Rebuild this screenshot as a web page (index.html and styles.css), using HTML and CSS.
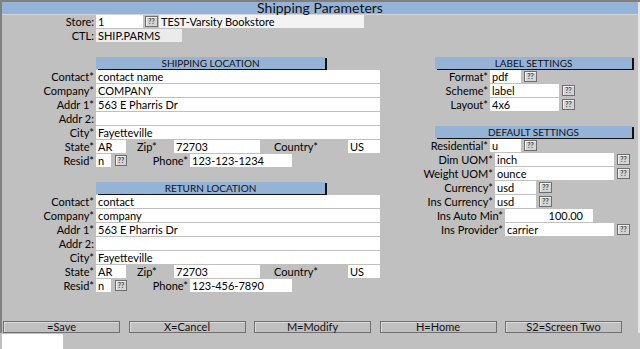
FILE: index.html
```html
<!DOCTYPE html>
<html lang="en">
<head>
  <meta charset="UTF-8">
  <title>Shipping Parameters</title>
  <link rel="stylesheet" href="styles.css">
</head>
<body>
  <div class="screen">
    <div class="frame">
      <div class="titlebar">Shipping Parameters</div>

      <!-- Cabecera: tienda y control -->
      <div class="row">
        <label class="lbl">Store:</label>
        <input class="fld store" value="1" readonly>
        <button class="lookup">??</button>
        <input class="fld store-desc" value="TEST-Varsity Bookstore" readonly>
      </div>
      <div class="row">
        <label class="lbl">CTL:</label>
        <input class="fld ctl" value="SHIP.PARMS" readonly>
      </div>

      <div class="main">
        <div class="col-left">
          <div class="section">
            <div class="head">SHIPPING LOCATION</div>
            <div class="row"><label class="lbl">Contact*</label><input class="fld full" value="contact name" readonly></div>
            <div class="row"><label class="lbl">Company*</label><input class="fld full" value="COMPANY" readonly></div>
            <div class="row"><label class="lbl">Addr 1*</label><input class="fld full" value="563 E Pharris Dr" readonly></div>
            <div class="row"><label class="lbl">Addr 2:</label><input class="fld full" value="" readonly></div>
            <div class="row"><label class="lbl">City*</label><input class="fld full" value="Fayetteville" readonly></div>
            <div class="row">
              <label class="lbl">State*</label><input class="fld state" value="AR" readonly>
              <span class="lbl-zip">Zip*</span><input class="fld zip" value="72703" readonly>
              <span class="lbl-country">Country*</span><input class="fld country" value="US" readonly>
            </div>
            <div class="row">
              <label class="lbl">Resid*</label><input class="fld resid" value="n" readonly><button class="lookup resid-btn">??</button>
              <span class="lbl-phone">Phone*</span><input class="fld phone" value="123-123-1234" readonly>
            </div>
          </div>

          <div class="section">
            <div class="head">RETURN LOCATION</div>
            <div class="row"><label class="lbl">Contact*</label><input class="fld full" value="contact" readonly></div>
            <div class="row"><label class="lbl">Company*</label><input class="fld full" value="company" readonly></div>
            <div class="row"><label class="lbl">Addr 1*</label><input class="fld full" value="563 E Pharris Dr" readonly></div>
            <div class="row"><label class="lbl">Addr 2:</label><input class="fld full" value="" readonly></div>
            <div class="row"><label class="lbl">City*</label><input class="fld full" value="Fayetteville" readonly></div>
            <div class="row">
              <label class="lbl">State*</label><input class="fld state" value="AR" readonly>
              <span class="lbl-zip">Zip*</span><input class="fld zip" value="72703" readonly>
              <span class="lbl-country">Country*</span><input class="fld country" value="US" readonly>
            </div>
            <div class="row">
              <label class="lbl">Resid*</label><input class="fld resid" value="n" readonly><button class="lookup resid-btn">??</button>
              <span class="lbl-phone">Phone*</span><input class="fld phone" value="123-456-7890" readonly>
            </div>
          </div>
        </div>

        <div class="col-right">
          <div class="section">
            <div class="head">LABEL SETTINGS</div>
            <div class="row"><label class="lbl-r">Format*</label><input class="fld short" value="pdf" readonly><button class="lookup">??</button></div>
            <div class="row"><label class="lbl-r">Scheme*</label><input class="fld medium" value="label" readonly><button class="lookup">??</button></div>
            <div class="row"><label class="lbl-r">Layout*</label><input class="fld medium" value="4x6" readonly><button class="lookup">??</button></div>
          </div>

          <div class="section">
            <div class="head">DEFAULT SETTINGS</div>
            <div class="row"><label class="lbl-r">Residential*</label><input class="fld short" value="u" readonly><button class="lookup">??</button></div>
            <div class="row"><label class="lbl-r mid">Dim UOM*</label><input class="fld long" value="inch" readonly><button class="lookup">??</button></div>
            <div class="row"><label class="lbl-r mid">Weight UOM*</label><input class="fld long" value="ounce" readonly><button class="lookup">??</button></div>
            <div class="row"><label class="lbl-r mid">Currency*</label><input class="fld curr" value="usd" readonly><button class="lookup">??</button></div>
            <div class="row"><label class="lbl-r mid">Ins Currency*</label><input class="fld curr" value="usd" readonly><button class="lookup">??</button></div>
            <div class="row"><label class="lbl-r wide">Ins Auto Min*</label><input class="fld amount" value="100.00" readonly></div>
            <div class="row"><label class="lbl-r wide">Ins Provider*</label><input class="fld provider" value="carrier" readonly><button class="lookup">??</button></div>
          </div>
        </div>
      </div>

      <!-- Teclas de función -->
      <div class="keys">
        <button class="key">=Save</button>
        <button class="key">X=Cancel</button>
        <button class="key">M=Modify</button>
        <button class="key">H=Home</button>
        <button class="key">S2=Screen Two</button>
      </div>
    </div>
    <div class="statusbar"><div class="status-box"></div></div>
  </div>
</body>
</html>
```

FILE: styles.css
```css
/* Estilo global */
* {
  box-sizing: border-box;
}

body {
  margin: 0;
  font-family: Lato, "Open Sans", sans-serif;
  font-size: 11px;
  color: #000;
  background-color: #c0c0c0;
}

.screen {
  width: 640px;
  height: 349px;
  border-top: 2px solid #7f7f7f;
  background-color: #c0c0c0;
  overflow: hidden;
}

.frame {
  height: 331px;
  border-left: 2px solid #808080;
  border-right: 2px solid #e6e6e6;
  display: flex;
  flex-direction: column;
}

/* Barra de título */
.titlebar {
  height: 13px;
  line-height: 12px;
  background-color: #95b3d7;
  border-bottom: 1px solid #d6d6d6;
  text-align: center;
  font-size: 14px;
  color: #111;
}

/* Filas de campos */
.row {
  display: flex;
  align-items: flex-start;
  height: 14px;
}

.lbl {
  width: 92px;
  margin-right: 2px;
  text-align: right;
  line-height: 13px;
  white-space: nowrap;
}

.fld {
  height: 13px;
  border: none;
  padding: 0 2px;
  margin: 0;
  font-family: inherit;
  font-size: 11px;
  color: #000;
  background-color: #fff;
  outline: none;
}

.lookup {
  width: 13px;
  height: 11px;
  margin: 1px 0 0 2px;
  padding: 0;
  border: 1px solid #6e6e6e;
  background-color: #d4d4d4;
  box-shadow: inset 1px 1px 0 #f2f2f2;
  font-family: inherit;
  font-size: 7px;
  font-weight: bold;
  line-height: 9px;
  color: #444;
  text-align: center;
}

.store {
  width: 47px;
}

.store-desc {
  width: 205px;
  margin-left: 1px;
  background-color: #f3f3f3;
}

.ctl {
  width: 86px;
  background-color: #ebebeb;
}

/* Columnas */
.main {
  display: flex;
  margin-top: 14px;
}

.col-left {
  width: 378px;
}

.col-right {
  flex: 1;
}

.section + .section {
  margin-top: 14px;
}

.head {
  height: 12px;
  margin-bottom: 1px;
  background-color: #95b3d7;
  box-shadow: 2px 1px 0 #111;
  text-align: center;
  font-size: 10px;
  line-height: 12px;
  color: #111;
}

.col-left .head {
  width: 229px;
  margin-left: 94px;
}

.col-right .head {
  width: 197px;
  margin-left: 55px;
}

.full {
  width: 284px;
}

.state {
  width: 30px;
}

.lbl-zip {
  width: 37px;
  margin-left: 11px;
  line-height: 13px;
}

.zip {
  width: 86px;
}

.lbl-country {
  width: 58px;
  text-align: right;
  line-height: 13px;
}

.country {
  width: 32px;
  margin-left: 30px;
}

.resid {
  width: 15px;
}

.resid-btn {
  margin-left: 4px;
  width: 12px;
}

.lbl-phone {
  width: 61px;
  margin-right: 2px;
  text-align: right;
  line-height: 13px;
}

.phone {
  width: 102px;
}

/* Columna derecha */
.lbl-r {
  width: 108px;
  margin-right: 2px;
  text-align: right;
  line-height: 13px;
  white-space: nowrap;
}

.lbl-r.mid {
  width: 113px;
}

.lbl-r.wide {
  width: 123px;
}

.short {
  width: 31px;
}

.medium {
  width: 69px;
}

.long {
  width: 119px;
}

.curr {
  width: 41px;
}

.amount {
  width: 88px;
  text-align: right;
  padding-right: 10px;
}

.provider {
  width: 109px;
}

.col-right .lookup {
  margin-left: 3px;
}

/* Teclas de función */
.keys {
  margin-top: auto;
  display: flex;
  gap: 8.5px;
  padding-left: 1px;
}

.key {
  width: 117px;
  height: 12px;
  padding: 0;
  border: 1px solid #6f6f6f;
  background-color: #c0c0c0;
  box-shadow: inset 1px 1px 0 #dcdcdc;
  font-family: inherit;
  font-size: 11px;
  line-height: 10px;
  color: #111;
}

.statusbar {
  padding: 1px 0 0 2px;
}

.status-box {
  width: 61px;
  height: 15px;
  background-color: #fff;
}
```
